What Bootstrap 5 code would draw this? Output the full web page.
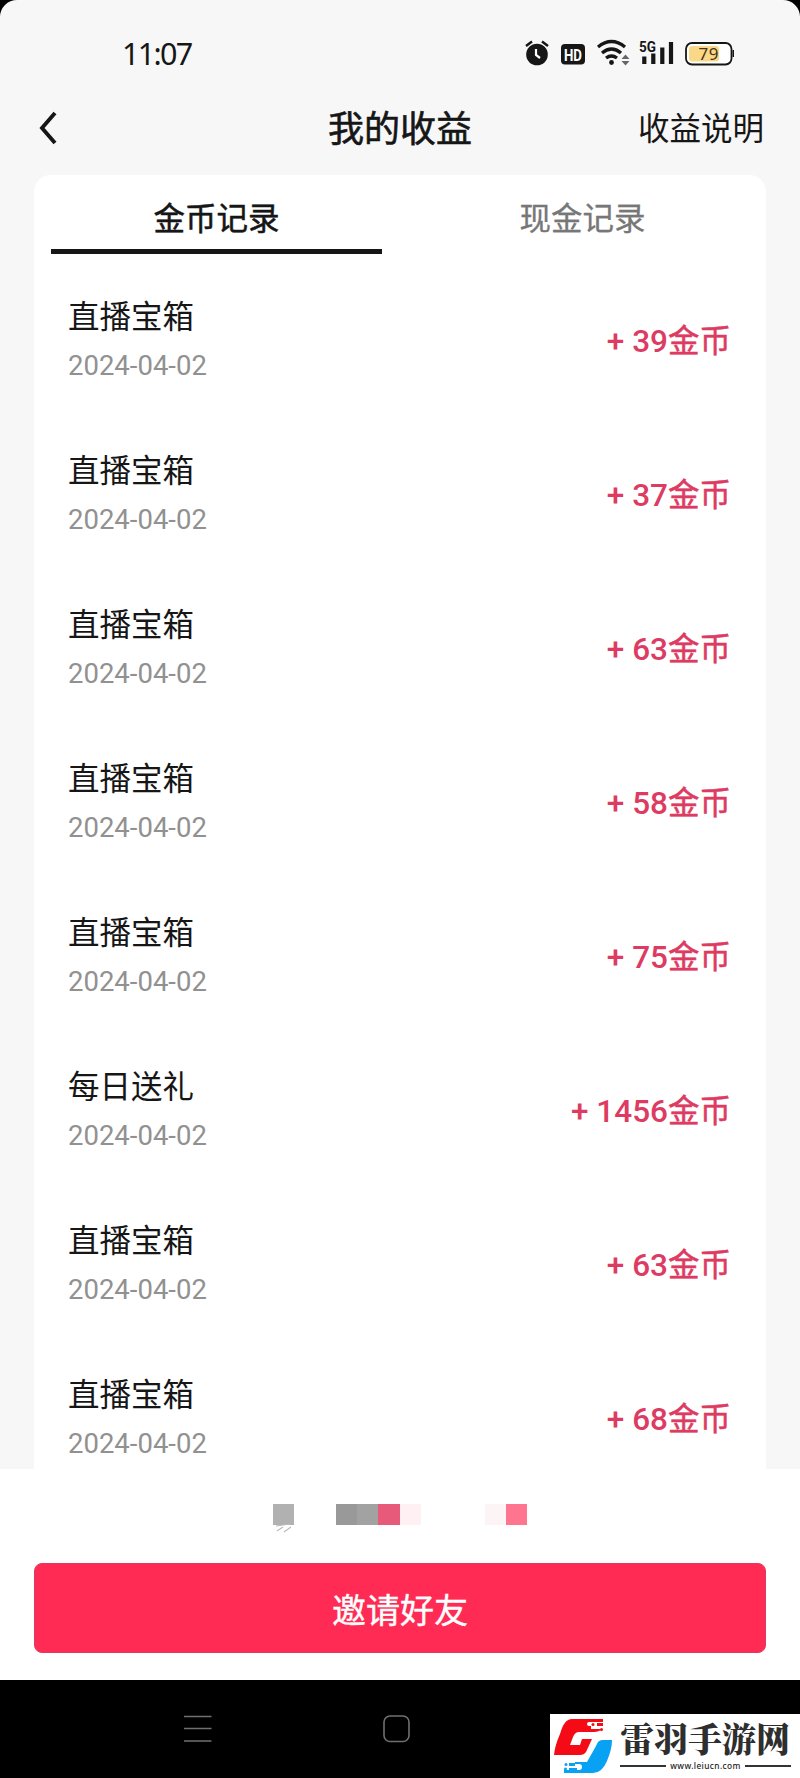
<!DOCTYPE html>
<html lang="zh-CN">
<head>
<meta charset="utf-8">
<meta name="viewport" content="width=device-width, initial-scale=1">
<title>我的收益</title>
<link href="https://cdn.jsdelivr.net/npm/bootstrap@5.3.0/dist/css/bootstrap.min.css" rel="stylesheet">
<style>
html{background:#000}
body{margin:0;background:#000;font-family:Roboto,"Noto Sans CJK SC",sans-serif;color:#161616;font-size:31.5px;line-height:40px}
.phone{width:800px;height:1778px;overflow:hidden}
.screen{height:1680px;background:#f7f7f8;border-radius:17px 17px 0 0;overflow:hidden}
.status{height:82px;padding:26px 66px 0 122px}
.clock{font-family:"Noto Sans",sans-serif;font-size:30.5px;line-height:55px;letter-spacing:-1.7px}
.topbar{height:93px;padding:0 35px 0 38px}
.topbar h1{font-size:36px;line-height:48px;font-weight:400;margin:0 3px 0 0;-webkit-text-stroke:.6px #161616}
.side{width:127px}
.records{margin:0 34px;height:1294px;border-radius:17px 17px 0 0;background:#fff;overflow:hidden}
.tabs{height:79px;padding:0 17px}
.tabs .tab{width:331px;padding-top:25px;height:79px}
.tabs .on{border-bottom:5px solid #161616;-webkit-text-stroke:.5px #161616}
.tabs .off{color:#777;margin-left:35px;-webkit-text-stroke:.3px #777}
.entry{height:154px;padding:44px 35px 0 34px}
.date{font-size:27.5px;line-height:36px;color:#919191;margin-top:10px}
.amount{color:#dd3b62;font-weight:500;padding-top:24px;white-space:pre}
.amount span{font-weight:400;-webkit-text-stroke:.5px #dd3b62}
.panel{height:211px;background:#fff}
.mosaic{height:94px;padding:35px 0 0 272px}
.mosaic i{display:block;height:21px;width:21px;flex:none}
.invite,.invite:hover{width:732px;height:90px;margin:0 34px;border-radius:8px;background:#ff2b54;border:1px solid #dd3b5d;color:#fff;font-size:34px;line-height:88px;padding:3px 0 0;-webkit-text-stroke:.4px #fff}
.navkeys{height:98px;padding-left:183px}
.site{width:250px;height:64px;background:#fff;margin-top:34px}
.site-name{font-family:"Noto Serif CJK SC","Noto Sans CJK SC",serif;font-weight:900;font-size:34px;line-height:38px;color:#2e2e2e}
.site-url{font-family:"Noto Sans",sans-serif;font-size:8.3px;line-height:12px;color:#222;letter-spacing:.4px;font-weight:500}
.site-url::before,.site-url::after{content:"";height:1.5px;background:#333;flex:1}
svg{display:block;flex:none}
</style>
</head>
<body>
<div class="phone">
<main class="screen">
  <header>
    <div class="status d-flex justify-content-between">
      <div class="clock">11:07</div>
      <svg width="212" height="50" viewBox="522 26 212 50" fill="none" stroke="#161616">
        <circle cx="537" cy="54.500" r="10.800" fill="#161616" stroke="none"/>
        <path d="M526 46l6-4.500M548 46l-6-4.500" stroke-width="2.400"/>
        <path d="M536 49v6l4 3" stroke="#fff" stroke-width="2.200"/>
        <rect x="561" y="44" width="24" height="20.500" rx="4" fill="#161616" stroke="none"/>
        <text x="573" y="60.500" text-anchor="middle" font-family="Roboto" font-size="16" font-weight="700" fill="#fff" stroke="none" textLength="18" lengthAdjust="spacingAndGlyphs">HD</text>
        <path d="M598 47Q611.500 36 625 47M602 53Q611.500 45 621 53M606 58Q611.500 54 617 58" stroke-width="3.300"/>
        <circle cx="611.500" cy="62.500" r="2.400" fill="#161616" stroke="none"/>
        <path d="M621.500 59l4-4.500 4 4.500zM621.500 61l4 4.500 4-4.500z" fill="#666" stroke="none"/>
        <path d="M644.300 64v-7.500M653.300 64v-10.500M662.300 64v-16.500M671 64V42" stroke-width="4.200"/>
        <text x="639" y="51.500" font-family="Roboto" font-size="14.500" font-weight="700" fill="#161616" stroke="none" textLength="17" lengthAdjust="spacingAndGlyphs">5G</text>
        <rect x="686" y="43" width="45.500" height="21.500" rx="6" stroke-width="1.800" fill="#fff"/>
        <rect x="689" y="46" width="30" height="15.500" rx="3" fill="#f9d987" stroke="none"/>
        <path d="M733.500 50v7" stroke-width="2"/>
        <text x="708.500" y="60" text-anchor="middle" font-family="Noto Sans" font-size="17" fill="#4a3518" stroke="none" textLength="20">79</text>
      </svg>
    </div>
    <nav class="topbar d-flex justify-content-between">
      <div class="side"><svg width="20" height="38" viewBox="0 0 20 38" style="margin-top:27px" fill="none" stroke="#161616" stroke-width="3.900"><path d="M17 4L4 19 17 34"/></svg></div>
      <h1 class="pt-4">我的收益</h1>
      <div class="side pt-4 text-nowrap"><div class="pt-1">收益说明</div></div>
    </nav>
  </header>
  <section class="records">
    <div class="tabs d-flex text-center"><div class="tab on">金币记录</div><div class="tab off">现金记录</div></div>
    <div class="entry d-flex justify-content-between"><div><div>直播宝箱</div><div class="date">2024-04-02</div></div><div class="amount">+ 39<span>金币</span></div></div>
    <div class="entry d-flex justify-content-between"><div><div>直播宝箱</div><div class="date">2024-04-02</div></div><div class="amount">+ 37<span>金币</span></div></div>
    <div class="entry d-flex justify-content-between"><div><div>直播宝箱</div><div class="date">2024-04-02</div></div><div class="amount">+ 63<span>金币</span></div></div>
    <div class="entry d-flex justify-content-between"><div><div>直播宝箱</div><div class="date">2024-04-02</div></div><div class="amount">+ 58<span>金币</span></div></div>
    <div class="entry d-flex justify-content-between"><div><div>直播宝箱</div><div class="date">2024-04-02</div></div><div class="amount">+ 75<span>金币</span></div></div>
    <div class="entry d-flex justify-content-between"><div><div>每日送礼</div><div class="date">2024-04-02</div></div><div class="amount">+ 1456<span>金币</span></div></div>
    <div class="entry d-flex justify-content-between"><div><div>直播宝箱</div><div class="date">2024-04-02</div></div><div class="amount">+ 63<span>金币</span></div></div>
    <div class="entry d-flex justify-content-between"><div><div>直播宝箱</div><div class="date">2024-04-02</div></div><div class="amount">+ 68<span>金币</span></div></div>
  </section>
  <footer class="panel">
    <div class="mosaic d-flex align-items-start">
      <svg width="64" height="32"><path fill="#b1b1b1" d="M1 0h21v21H1z"/><path d="M5 27l6-4M12 28l7-5M4 22l14-2" stroke="#bbb" stroke-width="1.200"/></svg>
      <i style="background:#999"></i><i style="background:#a2a2a2"></i><i style="background:#e85a79;width:22px"></i><i style="background:#fff0f3"></i>
      <i style="width:64px"></i><i style="background:#fdf4f5"></i><i style="background:#ff7590"></i>
    </div>
    <button class="btn invite">邀请好友</button>
  </footer>
</main>
<div class="navkeys d-flex justify-content-between">
  <svg width="230" height="98" fill="none" stroke="#707070" stroke-width="1.600"><path d="M1 36.500h27.500M1 48.500h27.500M1 61h27.500"/><rect x="201" y="36" width="25" height="25.500" rx="6"/></svg>
  <div class="site d-flex">
    <svg width="64" height="64" viewBox="0 0 64 64">
      <path fill="#f50b16" d="M22 5h31v3H39q-2 0-2 2t2 2h2v3h11q-3 3-8 3H29q-4 0-6 5l-3 8h10l2-6h10l-6 13q-2 3-6 3H4q1-10 6-21Q14 5 22 5z"/>
      <g fill="#f50b16"><circle cx="43" cy="10.500" r="1.500"/><path d="M47 9h6v3h-6z"/><circle cx="51.500" cy="15.500" r="1.500"/></g>
      <path fill="#08a1f4" d="M52 26h10q0 9-5 21-5 12-14 12H14v-3h15q3 0 3-3t-3-3h-4v-2h12l9-16q2-6 6-6z"/>
      <g fill="#08a1f4"><circle cx="16" cy="50.500" r="1.500"/><path d="M19 49h6v3h-6zM19 54h8v2h-8z"/><circle cx="15.500" cy="55" r="1.500"/></g>
    </svg>
    <div style="width:171px;margin-left:6px" class="text-nowrap"><div class="site-name" style="margin-top:5px">雷羽手游网</div><div class="site-url d-flex align-items-center gap-1" style="margin-top:3px">www.leiucn.com</div></div>
  </div>
</div>
</div>
<script src="https://cdn.jsdelivr.net/npm/bootstrap@5.3.0/dist/js/bootstrap.bundle.min.js"></script>
</body>
</html>
